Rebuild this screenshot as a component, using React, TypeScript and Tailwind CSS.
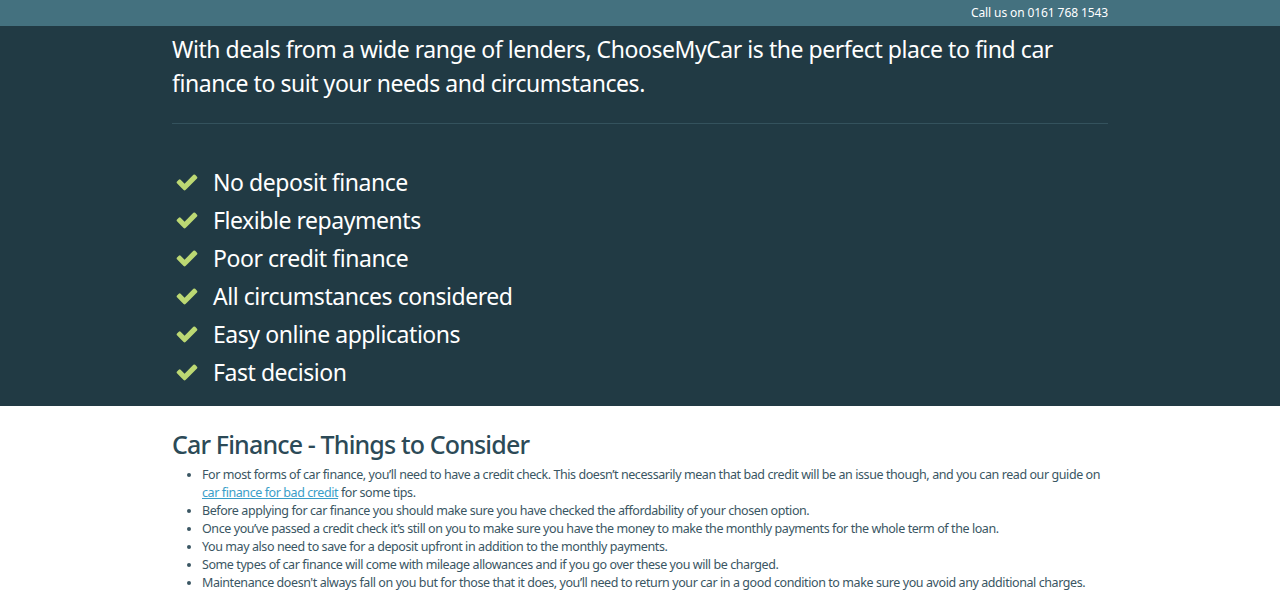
import React from 'react';

const features = [
  'No deposit finance',
  'Flexible repayments',
  'Poor credit finance',
  'All circumstances considered',
  'Easy online applications',
  'Fast decision',
];

function Check() {
  return (
    <svg viewBox="0 0 1792 1792" className="w-[24px] h-[24px] fill-[#bcd873]">
      <path d="M1671 566q0 40-28 68l-724 724-136 136q-28 28-68 28t-68-28l-136-136-362-362q-28-28-28-68t28-68l136-136q28-28 68-28t68 28l294 295 656-657q28-28 68-28t68 28l136 136q28 28 28 68z" />
    </svg>
  );
}

export default function App() {
  return (
    <div className="min-h-[604px] bg-white font-['Noto_Sans','Open_Sans',sans-serif]">
      <div className="bg-[#44717f] h-[26px]">
        <div className="max-w-[936px] mx-auto flex justify-end items-center h-full">
          <span className="text-[12px] tracking-[-0.1px] text-white">Call us on 0161 768 1543</span>
        </div>
      </div>

      <section className="bg-[#213a44] pb-[15px]">
        <div className="max-w-[936px] mx-auto">
          <p className="text-[23px] leading-[34px] tracking-[-0.45px] text-white pt-[6px]">
            With deals from a wide range of lenders, ChooseMyCar is the perfect place to find car
            finance to suit your needs and circumstances.
          </p>
          <div className="border-t border-[#34525d] mt-[23px] mb-[39px]" />
          <ul className="flex flex-col">
            {features.map((f) => (
              <li key={f} className="flex items-center h-[38px] text-white text-[23px] tracking-[-0.45px]">
                <span className="w-[41px] pl-[3px] flex items-center">
                  <Check />
                </span>
                {f}
              </li>
            ))}
          </ul>
        </div>
      </section>

      <section className="max-w-[936px] mx-auto pt-[21px]">
        <h2 className="text-[25px] leading-[34px] tracking-[-0.85px] font-medium text-[#2c4a57]">
          Car Finance - Things to Consider
        </h2>
        <ul className="list-disc pl-[30px] text-[12.5px] leading-[18px] tracking-[-0.42px] text-[#3a5663] mt-[5px]">
          <li>
            For most forms of car finance, you’ll need to have a credit check. This doesn’t necessarily
            mean that bad credit will be an issue though, and you can read our guide on{' '}
            <a href="#" className="text-[#3a9ec9] underline">car finance for bad credit</a> for some tips.
          </li>
          <li>Before applying for car finance you should make sure you have checked the affordability of your chosen option.</li>
          <li>Once you’ve passed a credit check it’s still on you to make sure you have the money to make the monthly payments for the whole term of the loan.</li>
          <li>You may also need to save for a deposit upfront in addition to the monthly payments.</li>
          <li>Some types of car finance will come with mileage allowances and if you go over these you will be charged.</li>
          <li>Maintenance doesn't always fall on you but for those that it does, you’ll need to return your car in a good condition to make sure you avoid any additional charges.</li>
        </ul>
      </section>
    </div>
  );
}
